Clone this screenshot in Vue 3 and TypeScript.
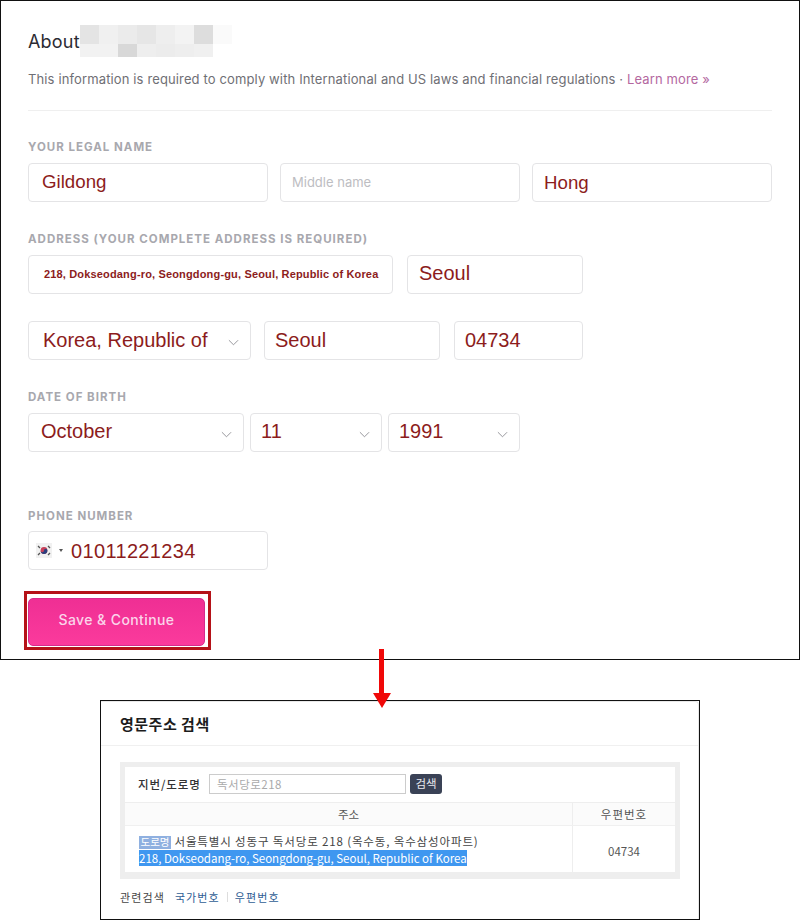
<script setup lang="ts">
const mosaic: string[][] = [
  ['#e4e4e4', '#f0f0f0', '#ebebeb', '#e6e6e6', '#eeeeee', '#f3f3f3', '#dddddd', '#fafafa'],
  ['#f2f2f2', '#f2f2f2', '#d8d8d8', '#eeeeee', '#ececec', '#eeeeee', '#f0f0f0', '#ffffff'],
]
</script>

<template>
  <div class="page">
    <section class="panel">
      <div class="head">
        <h1>About</h1>
        <div class="mosaic">
          <div v-for="(row, r) in mosaic" :key="r" class="mrow">
            <span v-for="(c, i) in row" :key="i" :style="{ background: c }"></span>
          </div>
        </div>
      </div>
      <p class="sub">
        This information is required to comply with International and US laws and financial regulations ·
        <a>Learn more »</a>
      </p>
      <hr class="rule" />

      <div class="label l-name">YOUR LEGAL NAME</div>
      <div class="row g12">
        <div class="field w240 val v-a">Gildong</div>
        <div class="field w240 ph">Middle name</div>
        <div class="field w240 val v-b">Hong</div>
      </div>

      <div class="label l-addr">ADDRESS (YOUR COMPLETE ADDRESS IS REQUIRED)</div>
      <div class="row g14">
        <div class="field w365 small">218, Dokseodang-ro, Seongdong-gu, Seoul, Republic of Korea</div>
        <div class="field w176 val v-c">Seoul</div>
      </div>
      <div class="row r3">
        <div class="field w223 val wide">
          Korea, Republic of
          <svg class="chev" viewBox="0 0 12 7"><polyline points="1,1 6,6 11,1" /></svg>
        </div>
        <div class="field w176 val m13 v-d">Seoul</div>
        <div class="field w129 val m14 v-d">04734</div>
      </div>

      <div class="label l-dob">DATE OF BIRTH</div>
      <div class="row g6">
        <div class="field w216 val v-e">
          October
          <svg class="chev" viewBox="0 0 12 7"><polyline points="1,1 6,6 11,1" /></svg>
        </div>
        <div class="field w132 val v-f">
          11
          <svg class="chev" viewBox="0 0 12 7"><polyline points="1,1 6,6 11,1" /></svg>
        </div>
        <div class="field w132 val v-f">
          1991
          <svg class="chev" viewBox="0 0 12 7"><polyline points="1,1 6,6 11,1" /></svg>
        </div>
      </div>

      <div class="label l-phone">PHONE NUMBER</div>
      <div class="field w240 phone">
        <span class="flag">
          <svg viewBox="0 0 16 15" width="16" height="15">
            <rect width="16" height="15" fill="#f1f1f1" />
            <circle cx="8" cy="7.5" r="3.4" fill="#c8405a" />
            <path d="M4.6 7.5a3.4 3.4 0 0 0 6.8 0a1.7 1.7 0 0 0-3.4 0a1.7 1.7 0 0 1-3.4 0z" fill="#2a3f7e" />
            <path d="M2 3l2 2M12 3l2 2M2 12l2-2M12 12l2-2" stroke="#555" stroke-width="1.3" />
          </svg>
        </span>
        <span class="caret"></span>
        <span class="num">01011221234</span>
      </div>

      <div class="btn-wrap">
        <button class="save" type="button">Save &amp; Continue</button>
        <span class="frame"></span>
      </div>
    </section>

    <div class="arrow"><i></i><b></b></div>

    <section class="shot">
      <div class="card">
        <h2>영문주소 검색</h2>
        <div class="box">
          <div class="search">
            <span class="s-label">지번/도로명</span>
            <span class="s-input">독서당로218</span>
            <span class="s-btn">검색</span>
          </div>
          <div class="thead">
            <div class="c1">주소</div>
            <div class="c2 zip-h">우편번호</div>
          </div>
          <div class="tbody">
            <div class="c1 addr">
              <div class="ko"><span class="badge">도로명</span> 서울특별시 성동구 독서당로 218 (옥수동, 옥수삼성아파트)</div>
              <div><span class="sel">218, Dokseodang-ro, Seongdong-gu, Seoul, Republic of Korea</span></div>
            </div>
            <div class="c2 zip">04734</div>
          </div>
        </div>
        <div class="links">
          <span>관련검색</span>
          <a class="first">국가번호</a>
          <em></em>
          <a>우편번호</a>
        </div>
      </div>
    </section>
  </div>
</template>

<style>
html, body { margin: 0; background: #fff; }
</style>

<style scoped>
.page {
  position: relative;
  width: 800px;
  height: 920px;
  overflow: hidden;
  background: #fff;
  font-family: Inter, "Liberation Sans", sans-serif;
}
.panel {
  box-sizing: border-box;
  width: 800px;
  height: 660px;
  padding: 24px 27px 0;
  border: 1px solid #111;
}
.head { display: flex; height: 32px; }
h1 {
  margin: 7px 0 0;
  font-size: 18px;
  line-height: 20px;
  font-weight: 400;
  letter-spacing: 0.2px;
  color: #2b2b33;
  width: 52px;
}
.mosaic { display: flex; flex-direction: column; }
.mrow { display: flex; height: 19px; }
.mrow + .mrow { height: 13px; }
.mrow span { width: 19px; }
.sub {
  margin: 13px 0 0;
  height: 18px;
  font-size: 13px;
  line-height: 18px;
  letter-spacing: 0.13px;
  color: #6f6f75;
  white-space: nowrap;
}
.sub a { color: #b4689f; }
.rule { margin: 22px 0 0; border: 0; border-top: 1px solid #efefef; width: 744px; }

.label {
  height: 16px;
  line-height: 18px;
  font-size: 11.5px;
  font-weight: 700;
  letter-spacing: 1px;
  color: #a8a8ae;
  white-space: nowrap;
}
.l-name { margin-top: 27px; margin-bottom: 9px; }
.l-addr { margin-top: 28px; margin-bottom: 9px; }
.l-dob { margin-top: 28px; margin-bottom: 9px; }
.l-phone { margin-top: 55px; margin-bottom: 8px; }

.row { display: flex; }
.g12 { gap: 12px; }
.g14 { gap: 14px; }
.g6 { gap: 6px; }
.r3 { margin-top: 27px; }
.m13 { margin-left: 13px; }
.m14 { margin-left: 14px; }

.field {
  box-sizing: border-box;
  position: relative;
  display: flex;
  align-items: center;
  height: 39px;
  flex: none;
  border: 1px solid #e4e4e6;
  border-radius: 4px;
  background: #fff;
  white-space: nowrap;
}
.w240 { width: 240px; }
.w365 { width: 365px; }
.w176 { width: 176px; }
.w223 { width: 223px; }
.w129 { width: 129px; }
.w216 { width: 216px; }
.w132 { width: 132px; }

.val {
  font-family: "Liberation Sans", Arial, sans-serif;
  font-size: 20px;
  color: #8c1c1c;
}
.v-a { padding-left: 13px; padding-bottom: 2px; font-size: 18.7px; }
.v-b { padding-left: 11px; font-size: 18.7px; }
.v-c { padding-left: 11px; padding-bottom: 3px; }
.v-d { padding-left: 10px; padding-bottom: 1px; }
.v-e { padding-left: 12px; padding-bottom: 2px; }
.v-f { padding-left: 10px; padding-bottom: 2px; }
.wide { padding-left: 14px; padding-bottom: 1px; }
.ph {
  padding-left: 11px;
  padding-bottom: 2px;
  font-size: 13px;
  color: #bdbdc2;
}
.small {
  padding-left: 15px;
  padding-bottom: 2px;
  font-family: "Liberation Sans", Arial, sans-serif;
  font-size: 11px;
  font-weight: 700;
  letter-spacing: 0.16px;
  color: #8c1c1c;
}
.chev {
  position: absolute;
  right: 11px;
  top: 17px;
  width: 11px;
  height: 7px;
  fill: none;
  stroke: #8e8e94;
  stroke-width: 1;
}
.phone { padding-left: 7px; }
.flag { display: flex; width: 16px; height: 15px; }
.caret {
  margin-left: 7px;
  border-left: 2px solid transparent;
  border-right: 2px solid transparent;
  border-top: 3px solid #555;
}
.num {
  margin-left: 8px;
  margin-top: 2px;
  font-family: "Liberation Sans", Arial, sans-serif;
  font-size: 20px;
  letter-spacing: 0.35px;
  color: #8c1c1c;
}

.btn-wrap {
  position: relative;
  width: 177px;
  height: 48px;
  margin-top: 28px;
}
.save {
  display: block;
  box-sizing: border-box;
  width: 177px;
  height: 48px;
  padding: 0 0 6px;
  border: 1px solid #d62b8c;
  border-radius: 5px;
  background: linear-gradient(#ef2f94, #fb3a9c);
  color: #fbd5ea;
  font-family: Inter, "Liberation Sans", sans-serif;
  font-size: 14px;
  font-weight: 500;
  letter-spacing: 0.4px;
}
.frame {
  position: absolute;
  top: -7px;
  left: -4px;
  right: -6px;
  bottom: -4px;
  border: 3px solid #b51218;
  pointer-events: none;
}

.arrow {
  position: absolute;
  left: 372px;
  top: 649px;
  width: 19px;
  display: flex;
  flex-direction: column;
  align-items: center;
  z-index: 2;
}
.arrow i { width: 5px; height: 44px; background: #f00808; }
.arrow b {
  width: 0;
  height: 0;
  border-left: 9.5px solid transparent;
  border-right: 9.5px solid transparent;
  border-top: 15px solid #f00808;
}

.shot {
  box-sizing: border-box;
  width: 600px;
  height: 220px;
  margin: 40px 0 0 100px;
  border: 1px solid #111;
  font-family: "Noto Sans CJK KR", "Liberation Sans", sans-serif;
}
.card {
  box-sizing: border-box;
  height: 218px;
  padding: 0 0 0 19px;
  border-top-right-radius: 4px;
  border-right: 1px solid #e8e8e8;
  border-top: 1px solid #e8e8e8;
}
h2 {
  margin: 0 0 0 -19px;
  padding: 12px 0 0 19px;
  height: 31px;
  line-height: 20px;
  font-size: 15px;
  font-weight: 700;
  letter-spacing: 0.5px;
  color: #1c1c1c;
  border-bottom: 1px solid #f0f0f0;
}
.box {
  box-sizing: border-box;
  width: 560px;
  height: 117px;
  margin-top: 16px;
  border-style: solid;
  border-color: #eee;
  border-width: 5px 5px 7px 5px;
  font-size: 11.5px;
  color: #555;
}
.search {
  display: flex;
  align-items: center;
  height: 36px;
  padding: 0 0 1px 13px;
  border-bottom: 1px solid #eee;
  box-sizing: border-box;
}
.s-label { width: 71px; font-weight: 500; color: #333; letter-spacing: 0.9px; }
.s-input {
  box-sizing: border-box;
  width: 197px;
  height: 20px;
  line-height: 18px;
  padding-left: 7px;
  border: 1px solid #ccc;
  color: #aaa;
  letter-spacing: 0.5px;
}
.s-btn {
  margin-left: 4px;
  width: 32px;
  height: 20px;
  line-height: 19px;
  text-align: center;
  border-radius: 3px;
  background: #3a4256;
  color: #e8e8ee;
}
.thead, .tbody { display: flex; }
.thead {
  height: 22px;
  line-height: 22px;
  background: #fbfbfb;
  border-bottom: 1px solid #f0f0f0;
  text-align: center;
}
.tbody { height: 46px; }
.c1 { width: 448px; box-sizing: border-box; border-right: 1px solid #eee; }
.c2 { flex: 1; text-align: center; }
.zip-h { letter-spacing: 1px; }
.addr { padding: 7px 0 0 14px; text-align: left; font-size: 11.5px; line-height: 17px; white-space: nowrap; }
.ko { height: 17px; letter-spacing: 0.86px; color: #444; }
.zip { line-height: 50px; }
.badge {
  display: inline-block;
  width: 32px;
  height: 13px;
  line-height: 12px;
  text-align: center;
  background: #8fb0e0;
  color: #fff;
  font-size: 10.5px;
  letter-spacing: 0;
}
.sel { background: #3f97f0; color: #fff; display: inline-block; height: 16px; line-height: 16px; }
.links {
  display: flex;
  align-items: center;
  margin-top: 9px;
  height: 18px;
  font-size: 11px;
  letter-spacing: 1.1px;
  color: #444;
}
.links a { color: #2f5e95; }
.links .first { margin-left: 10px; }
.links em { width: 1px; height: 10px; background: #ddd; margin: 0 7px; }
</style>
